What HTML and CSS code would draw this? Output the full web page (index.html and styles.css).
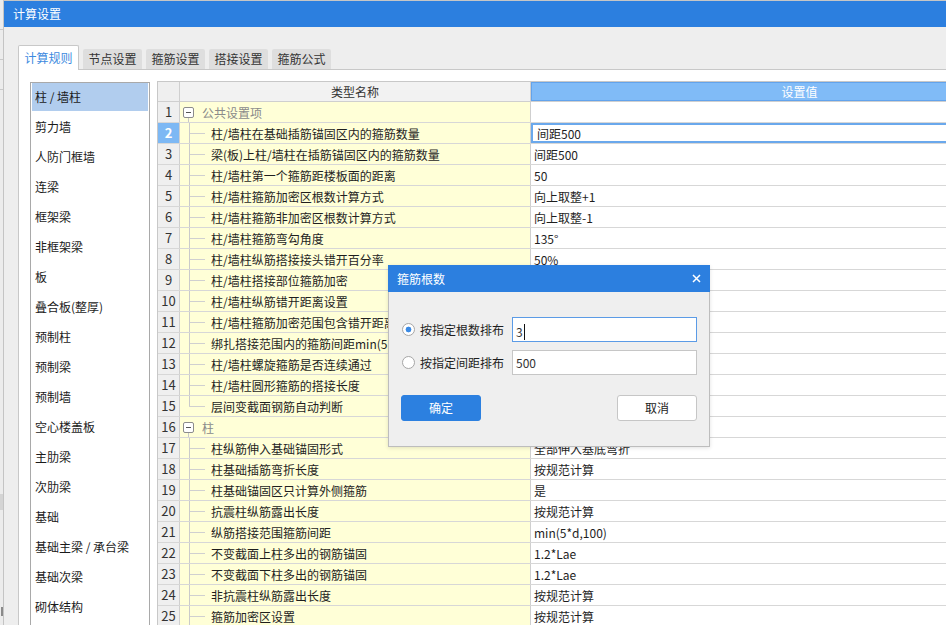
FILE: index.html
```html
<!DOCTYPE html>
<html lang="zh-CN">
<head>
<meta charset="utf-8">
<title>计算设置</title>
<link rel="stylesheet" href="styles.css">
</head>
<body>
<div class="screen">
  <div class="edge"></div>
  <div class="window">
    <div class="titlebar">计算设置</div>
    <div class="content">
      <div class="tabs">
        <div class="tab active">计算规则</div>
        <div class="tab">节点设置</div>
        <div class="tab">箍筋设置</div>
        <div class="tab">搭接设置</div>
        <div class="tab">箍筋公式</div>
      </div>
      <div class="panel">
        <ul class="cat-list">
          <li class="sel">柱 / 墙柱</li>
          <li>剪力墙</li>
          <li>人防门框墙</li>
          <li>连梁</li>
          <li>框架梁</li>
          <li>非框架梁</li>
          <li>板</li>
          <li>叠合板(整厚)</li>
          <li>预制柱</li>
          <li>预制梁</li>
          <li>预制墙</li>
          <li>空心楼盖板</li>
          <li>主肋梁</li>
          <li>次肋梁</li>
          <li>基础</li>
          <li>基础主梁 / 承台梁</li>
          <li>基础次梁</li>
          <li>砌体结构</li>
        </ul>
        <div class="grid">
          <div class="row head"><div class="num"></div><div class="name">类型名称</div><div class="val">设置值</div></div>
          <div class="row"><div class="num">1</div><div class="name"><span class="gbox"></span><span class="gtext">公共设置项</span></div><div class="val"></div></div>
          <div class="row cur"><div class="num">2</div><div class="name"><span class="conn"></span><span class="ntext">柱/墙柱在基础插筋锚固区内的箍筋数量</span></div><div class="val">间距500</div></div>
          <div class="row"><div class="num">3</div><div class="name"><span class="conn"></span><span class="ntext">梁(板)上柱/墙柱在插筋锚固区内的箍筋数量</span></div><div class="val">间距500</div></div>
          <div class="row"><div class="num">4</div><div class="name"><span class="conn"></span><span class="ntext">柱/墙柱第一个箍筋距楼板面的距离</span></div><div class="val">50</div></div>
          <div class="row"><div class="num">5</div><div class="name"><span class="conn"></span><span class="ntext">柱/墙柱箍筋加密区根数计算方式</span></div><div class="val">向上取整+1</div></div>
          <div class="row"><div class="num">6</div><div class="name"><span class="conn"></span><span class="ntext">柱/墙柱箍筋非加密区根数计算方式</span></div><div class="val">向上取整-1</div></div>
          <div class="row"><div class="num">7</div><div class="name"><span class="conn"></span><span class="ntext">柱/墙柱箍筋弯勾角度</span></div><div class="val">135°</div></div>
          <div class="row"><div class="num">8</div><div class="name"><span class="conn"></span><span class="ntext">柱/墙柱纵筋搭接接头错开百分率</span></div><div class="val">50%</div></div>
          <div class="row"><div class="num">9</div><div class="name"><span class="conn"></span><span class="ntext">柱/墙柱搭接部位箍筋加密</span></div><div class="val"></div></div>
          <div class="row"><div class="num">10</div><div class="name"><span class="conn"></span><span class="ntext">柱/墙柱纵筋错开距离设置</span></div><div class="val"></div></div>
          <div class="row"><div class="num">11</div><div class="name"><span class="conn"></span><span class="ntext">柱/墙柱箍筋加密范围包含错开距离</span></div><div class="val"></div></div>
          <div class="row"><div class="num">12</div><div class="name"><span class="conn"></span><span class="ntext">绑扎搭接范围内的箍筋间距min(5*d,100)</span></div><div class="val"></div></div>
          <div class="row"><div class="num">13</div><div class="name"><span class="conn"></span><span class="ntext">柱/墙柱螺旋箍筋是否连续通过</span></div><div class="val"></div></div>
          <div class="row"><div class="num">14</div><div class="name"><span class="conn"></span><span class="ntext">柱/墙柱圆形箍筋的搭接长度</span></div><div class="val"></div></div>
          <div class="row"><div class="num">15</div><div class="name"><span class="conn last"></span><span class="ntext">层间变截面钢筋自动判断</span></div><div class="val"></div></div>
          <div class="row"><div class="num">16</div><div class="name"><span class="gbox"></span><span class="gtext">柱</span></div><div class="val"></div></div>
          <div class="row"><div class="num">17</div><div class="name"><span class="conn"></span><span class="ntext">柱纵筋伸入基础锚固形式</span></div><div class="val">全部伸入基底弯折</div></div>
          <div class="row"><div class="num">18</div><div class="name"><span class="conn"></span><span class="ntext">柱基础插筋弯折长度</span></div><div class="val">按规范计算</div></div>
          <div class="row"><div class="num">19</div><div class="name"><span class="conn"></span><span class="ntext">柱基础锚固区只计算外侧箍筋</span></div><div class="val">是</div></div>
          <div class="row"><div class="num">20</div><div class="name"><span class="conn"></span><span class="ntext">抗震柱纵筋露出长度</span></div><div class="val">按规范计算</div></div>
          <div class="row"><div class="num">21</div><div class="name"><span class="conn"></span><span class="ntext">纵筋搭接范围箍筋间距</span></div><div class="val">min(5*d,100)</div></div>
          <div class="row"><div class="num">22</div><div class="name"><span class="conn"></span><span class="ntext">不变截面上柱多出的钢筋锚固</span></div><div class="val">1.2*Lae</div></div>
          <div class="row"><div class="num">23</div><div class="name"><span class="conn"></span><span class="ntext">不变截面下柱多出的钢筋锚固</span></div><div class="val">1.2*Lae</div></div>
          <div class="row"><div class="num">24</div><div class="name"><span class="conn"></span><span class="ntext">非抗震柱纵筋露出长度</span></div><div class="val">按规范计算</div></div>
          <div class="row"><div class="num">25</div><div class="name"><span class="conn"></span><span class="ntext">箍筋加密区设置</span></div><div class="val">按规范计算</div></div>
        </div>
      </div>
    </div>
  </div>

  <div class="dialog">
    <div class="dlg-title">
      <span>箍筋根数</span>
      <svg class="dlg-close" width="9" height="9" viewBox="0 0 9 9"><path d="M1 1 L8 8 M8 1 L1 8" stroke="#fff" stroke-width="1.5" fill="none"/></svg>
    </div>
    <div class="dlg-body">
      <div class="opt">
        <span class="radio on"></span>
        <span class="opt-label">按指定根数排布</span>
        <div class="input focus"><span class="caret">3</span></div>
      </div>
      <div class="opt">
        <span class="radio"></span>
        <span class="opt-label">按指定间距排布</span>
        <div class="input">500</div>
      </div>
      <div class="btns">
        <div class="btn primary">确定</div>
        <div class="btn">取消</div>
      </div>
    </div>
  </div>
</div>
</body>
</html>
```

FILE: styles.css
```css
* { box-sizing: border-box; margin: 0; padding: 0; }
html, body { width: 946px; height: 625px; overflow: hidden; }
body {
  font-family: "Noto Sans CJK SC", "Microsoft YaHei", sans-serif;
  font-size: 12px;
  color: #1e1e1e;
  background: #eeeeee;
}
.screen {
  position: relative;
  display: flex;
  width: 946px;
  height: 625px;
  overflow: hidden;
}

/* background window sliver at the left */
.edge {
  width: 4px;
  flex: none;
  border-right: 1px solid #c4c4c4;
  background:
    linear-gradient(#c9c9c9, #c9c9c9) 0 29px / 100% 1px no-repeat,
    linear-gradient(#c9c9c9, #c9c9c9) 0 59px / 100% 1px no-repeat,
    linear-gradient(#c9c9c9, #c9c9c9) 0 89px / 100% 1px no-repeat,
    linear-gradient(#d4d4d4, #d4d4d4) 0 494px / 100% 16px no-repeat,
    linear-gradient(#8a8a8a, #8a8a8a) 1px 607px / 2px 9px no-repeat,
    #ececec;
}

.window {
  flex: 1;
  min-width: 0;
  display: flex;
  flex-direction: column;
  border-top: 1px solid #c6c6c6;
}
.titlebar {
  height: 26px;
  flex: none;
  background: #2c7fdf;
  color: #fff;
  line-height: 26px;
  padding-left: 9px;
  font-size: 12px;
}
.content {
  flex: 1;
  display: flex;
  flex-direction: column;
  padding: 18px 0 0 14px;
  background: #eeeeee;
}

/* tabs */
.tabs {
  display: flex;
  align-items: flex-end;
  height: 25px;
  flex: none;
}
.tab {
  width: 59px;
  height: 21px;
  margin-left: 4px;
  background: #dedede;
  color: #333;
  text-align: center;
  line-height: 20px;
  border-radius: 2px 2px 0 0;
}
.tab.active {
  position: relative;
  z-index: 1;
  width: 61px;
  height: 25px;
  margin-left: 0;
  background: #fff;
  border: 1px solid #c8c8c8;
  border-bottom: none;
  color: #3d8ae0;
  line-height: 24px;
}
.tab.active + .tab { margin-left: 4px; }

.panel {
  flex: 1;
  display: flex;
  align-items: flex-start;
  margin-top: -1px;
  background: #fff;
  border-top: 1px solid #c8c8c8;
  border-left: 1px solid #c8c8c8;
  padding: 11px 0 0 11px;
  overflow: hidden;
}

/* category list */
.cat-list {
  list-style: none;
  width: 120px;
  height: 560px;
  flex: none;
  margin-top: 1px;
  border: 1px solid #a9a9a9;
  padding: 0 1px;
}
.cat-list li {
  height: 30px;
  line-height: 28px;
  padding-left: 3px;
  color: #1a1a1a;
  white-space: nowrap;
}
.cat-list li.sel {
  background: linear-gradient(#b1cdee, #b1cdee) 0 0 / 100% 28px no-repeat;
}

/* property grid */
.grid {
  margin-left: 7px;
  width: 911px;
  flex: none;
  border-left: 1px solid #c8c8c8;
  border-top: 1px solid #c8c8c8;
}
.row {
  display: flex;
  height: 21px;
  border-bottom: 1px solid #d7d7d7;
}
.num {
  width: 22px;
  flex: none;
  background: #efefef;
  border-right: 1px solid #cfcfcf;
  text-align: center;
  font-size: 13px;
  line-height: 20px;
  color: #333;
}
.name {
  width: 351px;
  flex: none;
  display: flex;
  align-items: center;
  padding-left: 3px;
  background: #ffffd7;
  border-right: 1px solid #cfcfcf;
  white-space: nowrap;
  overflow: hidden;
}
.val {
  flex: 1;
  display: flex;
  align-items: center;
  padding-left: 3px;
  background: #fff;
  white-space: nowrap;
}

.row.head { height: 20px; border-bottom-color: #cfcfcf; }
.row.head .num { background: #efefef; }
.row.head .name {
  justify-content: center;
  padding-left: 0;
  background: #f2f2f2;
  color: #333;
}
.row.head .val {
  justify-content: center;
  padding-left: 0;
  background: #80bbf7;
  color: #fff;
  box-shadow: inset 0 0 0 1px #62a3ec;
}

.row.cur .num {
  background: #7db8f4;
  color: #fff;
  font-weight: bold;
}
.row.cur .val {
  padding-left: 6px;
  box-shadow: inset 0 0 0 2px #6aa8ec;
}

/* tree */
.gbox {
  width: 11px;
  height: 11px;
  flex: none;
  border: 1px solid #8c8c8c;
  border-radius: 2px;
  background:
    linear-gradient(#555, #555) 2px 4px / 5px 1px no-repeat,
    #fff;
}
.row .name:has(.gbox) {
  background:
    linear-gradient(#c8c8c8, #c8c8c8) 8px 15px / 1px 5px no-repeat,
    #ffffd7;
}
.gtext {
  margin-left: 8px;
  color: #8a8a8a;
}
.conn {
  width: 16px;
  height: 100%;
  flex: none;
  margin-left: 6px;
  background:
    linear-gradient(#cacaca, #cacaca) 0 0 / 1px 100% no-repeat,
    linear-gradient(#d0d0d0, #d0d0d0) 0 50% / 100% 1px no-repeat;
}
.conn.last {
  background:
    linear-gradient(#cacaca, #cacaca) 0 0 / 1px 50% no-repeat,
    linear-gradient(#d0d0d0, #d0d0d0) 0 50% / 100% 1px no-repeat;
}
.ntext { margin-left: 6px; }

/* dialog */
.dialog {
  position: absolute;
  left: 388px;
  top: 265px;
  width: 322px;
  height: 182px;
  background: #efefef;
  border: 1px solid #bdbdbd;
  border-top: none;
  box-shadow: 0 1px 4px rgba(0, 0, 0, 0.12);
  display: flex;
  flex-direction: column;
}
.dlg-title {
  height: 27px;
  flex: none;
  margin: 0 -1px;
  background: #2c7fdf;
  color: #fff;
  display: flex;
  align-items: center;
  justify-content: space-between;
  padding: 0 9px 0 9px;
}
.dlg-close { display: block; }
.dlg-body {
  padding: 25px 12px 0 13px;
  display: flex;
  flex-direction: column;
}
.opt {
  display: flex;
  align-items: center;
  height: 25px;
  margin-bottom: 8px;
}
.radio {
  width: 13px;
  height: 13px;
  flex: none;
  border-radius: 50%;
  border: 1px solid #a6a6a6;
  background: #fff;
}
.radio.on {
  background:
    radial-gradient(circle, #3b8ae4 0 2.6px, transparent 3.2px),
    #fff;
}
.opt-label {
  margin-left: 5px;
  color: #1e1e1e;
}
.input {
  margin-left: auto;
  width: 185px;
  height: 25px;
  background: #fff;
  border: 1px solid #c6c6c6;
  padding-left: 3px;
  line-height: 23px;
  color: #333;
}
.input.focus { border-color: #5b9be6; }
.caret {
  display: inline-block;
  padding-right: 1px;
  border-right: 1px solid #111;
  line-height: 16px;
  vertical-align: middle;
}
.btns {
  display: flex;
  justify-content: space-between;
  margin-top: 12px;
  margin-left: -1px;
}
.btn {
  width: 80px;
  height: 26px;
  line-height: 24px;
  text-align: center;
  border: 1px solid #c6c6c6;
  border-radius: 3px;
  background: #fff;
  color: #222;
}
.btn.primary {
  background: #2c80e0;
  border-color: #2c80e0;
  color: #fff;
}
```
